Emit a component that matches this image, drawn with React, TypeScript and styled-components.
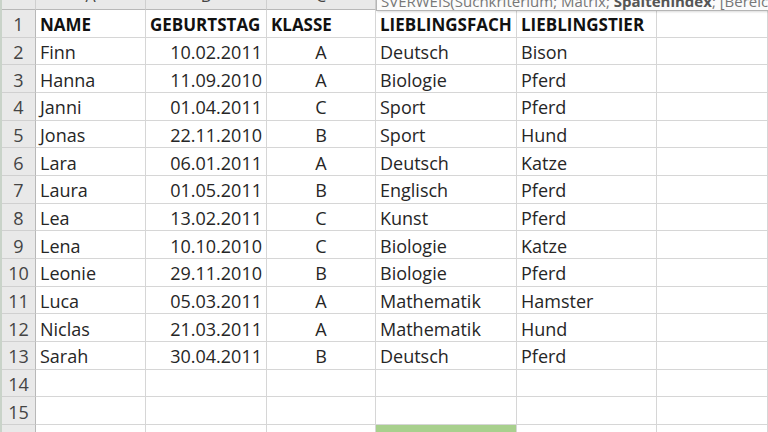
import React, { FC } from 'react';
import styled, { createGlobalStyle } from 'styled-components';

const GlobalStyle = createGlobalStyle`
  html, body {
    margin: 0;
    padding: 0;
    background: #ffffff;
    overflow: hidden;
  }
  body {
    font-family: 'Open Sans', 'Liberation Sans', sans-serif;
  }
`;

const StyledSheet = styled.div`
  position: relative;
  width: 768px;
  height: 432px;
  overflow: hidden;
  display: grid;
  grid-template-columns: 34px 110px 121px 109px 141px 140px 1fr;
  grid-template-rows: 10px;
  grid-auto-rows: 27.67px;
  color: #262626;
  font-size: 18px;
  border-left: 2px solid #c9d3c9;
  box-sizing: border-box;
`;

const StyledColHeader = styled.div`
  box-sizing: border-box;
  background: #e9e9e9;
  border-right: 1px solid #cfcfcf;
  border-bottom: 1px solid #b8b8b8;
  display: flex;
  align-items: flex-end;
  justify-content: center;
  overflow: hidden;
  color: #444;
  font-size: 16px;
  line-height: 16px;
  padding-bottom: 5px;
`;

const StyledRowHeader = styled.div`
  box-sizing: border-box;
  background: #e9e9e9;
  border-right: 1px solid #b8b8b8;
  border-bottom: 1px solid #d0d0d0;
  display: flex;
  align-items: center;
  justify-content: center;
  padding-top: 2px;
  color: #444;
  overflow: hidden;
`;

type Align = 'left' | 'right' | 'center';

const StyledCell = styled.div<{ $align?: Align; $bold?: boolean; $fill?: string }>`
  box-sizing: border-box;
  border-right: 1px solid #d6d6d6;
  border-bottom: 1px solid #d6d6d6;
  background: ${(p) => p.$fill || 'transparent'};
  display: flex;
  align-items: center;
  justify-content: ${(p) =>
    p.$align === 'right' ? 'flex-end' : p.$align === 'center' ? 'center' : 'flex-start'};
  padding: 2px 4px 0;
  white-space: nowrap;
  overflow: visible;
  font-weight: ${(p) => (p.$bold ? 700 : 400)};
  font-size: ${(p) => (p.$bold ? '17px' : '18px')};
  color: ${(p) => (p.$bold ? '#111' : '#262626')};
`;

const StyledTooltip = styled.div`
  position: absolute;
  left: 374px;
  top: -8px;
  right: -20px;
  height: 19px;
  box-sizing: border-box;
  background: #fbfbfb;
  border: 1px solid #b5b5b5;
  box-shadow: 1px 1px 2px rgba(0, 0, 0, 0.15);
  padding: 0 4px;
  font-size: 15px;
  line-height: 17px;
  color: #777;
  white-space: nowrap;
  overflow: hidden;
`;

const StyledArg = styled.b`
  color: #555;
`;

const COLUMNS = ['A', 'B', 'C', 'D', 'E', 'F'];

const ROWS: string[][] = [
  ['NAME', 'GEBURTSTAG', 'KLASSE', 'LIEBLINGSFACH', 'LIEBLINGSTIER'],
  ['Finn', '10.02.2011', 'A', 'Deutsch', 'Bison'],
  ['Hanna', '11.09.2010', 'A', 'Biologie', 'Pferd'],
  ['Janni', '01.04.2011', 'C', 'Sport', 'Pferd'],
  ['Jonas', '22.11.2010', 'B', 'Sport', 'Hund'],
  ['Lara', '06.01.2011', 'A', 'Deutsch', 'Katze'],
  ['Laura', '01.05.2011', 'B', 'Englisch', 'Pferd'],
  ['Lea', '13.02.2011', 'C', 'Kunst', 'Pferd'],
  ['Lena', '10.10.2010', 'C', 'Biologie', 'Katze'],
  ['Leonie', '29.11.2010', 'B', 'Biologie', 'Pferd'],
  ['Luca', '05.03.2011', 'A', 'Mathematik', 'Hamster'],
  ['Niclas', '21.03.2011', 'A', 'Mathematik', 'Hund'],
  ['Sarah', '30.04.2011', 'B', 'Deutsch', 'Pferd'],
  [],
  [],
  [],
];

function alignFor(row: number, col: number): Align {
  if (row === 0) return 'left';
  if (col === 1) return 'right';
  if (col === 2) return 'center';
  return 'left';
}

const App: FC = () => {
  return (
    <>
      <GlobalStyle />
      <StyledSheet>
        <StyledColHeader />
        {COLUMNS.map((c) => (
          <StyledColHeader key={c}>{c}</StyledColHeader>
        ))}
        {ROWS.map((row, r) => (
          <React.Fragment key={r}>
            <StyledRowHeader>{r + 1}</StyledRowHeader>
            {COLUMNS.map((_, c) => (
              <StyledCell
                key={c}
                $align={alignFor(r, c)}
                $bold={r === 0}
                $fill={r === 15 && c === 3 ? '#a8d08d' : undefined}
              >
                {row[c] || ''}
              </StyledCell>
            ))}
          </React.Fragment>
        ))}
        <StyledTooltip>
          SVERWEIS(Suchkriterium; Matrix; <StyledArg>Spaltenindex</StyledArg>; [Bereich_Verweis])
        </StyledTooltip>
      </StyledSheet>
    </>
  );
};

export default App;
